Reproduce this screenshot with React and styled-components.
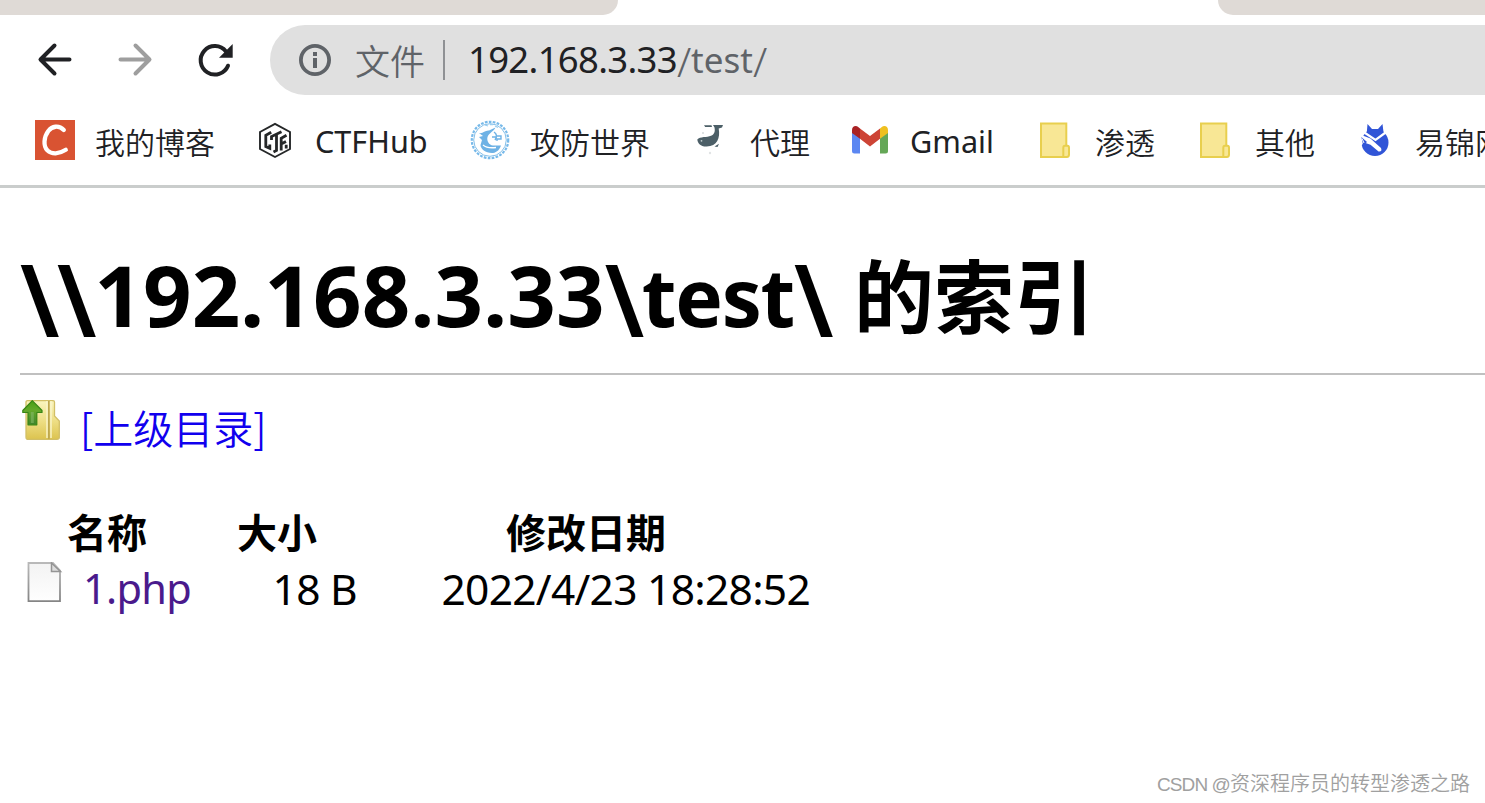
import React from 'react';
import styled, { createGlobalStyle } from 'styled-components';

const GlobalStyle = createGlobalStyle`
  * {
    box-sizing: border-box;
  }

  body {
    margin: 0;
    background: #fff;
    color: #000;
    font-family: 'Noto Sans', 'Noto Sans CJK SC', sans-serif;
    overflow: hidden;
  }
`;

const Window = styled.div`
  position: relative;
  display: flex;
  flex-direction: column;
  width: 1485px;
  height: 803px;
  overflow: hidden;
  white-space: nowrap;
`;

const TabStrip = styled.div`
  display: flex;
  justify-content: space-between;
  height: 15px;
`;

const TabEdge = styled.div`
  width: ${props => props.$width}px;
  background: #dfdad6;
  border-radius: ${props => props.$right ? '0 0 0 16px' : '0 0 16px 0'};
`;

const Toolbar = styled.div`
  display: flex;
  align-items: center;
  height: 90px;
  padding-left: 35px;
`;

const NavButton = styled.span`
  display: flex;
  width: 40px;
  height: 40px;
  margin-right: 40px;
  color: ${props => props.$muted ? '#9e9e9e' : '#202124'};

  &:nth-child(3) {
    margin-right: 35px;
  }
`;

const Omnibox = styled.div`
  display: flex;
  align-items: center;
  flex: 1;
  height: 70px;
  padding-left: 28px;
  border-radius: 35px 0 0 35px;
  background: #e0e0e0;
  color: #5f6368;
  font-size: 35px;
  line-height: 70px;
`;

const Scheme = styled.span`
  margin-left: 23px;
  font-family: 'Noto Sans CJK SC', sans-serif;
  font-weight: 350;
`;

const Divider = styled.span`
  width: 2px;
  height: 40px;
  margin: 0 23px 0 18px;
  background: #8f9194;
`;

const Address = styled.span`
  padding-bottom: 2px;
  font-size: 35px;
`;

const Host = styled.span`
  color: #202124;
  font-size: 36.5px;
  letter-spacing: -0.7px;
`;

const Slash = styled.span`
  font-size: 41px;
  font-weight: 300;
  line-height: 0;
  vertical-align: -4px;
`;

const Bookmarks = styled.div`
  display: flex;
  align-items: center;
  height: 83px;
  padding: 0 0 10px 35px;
  gap: 40px;
  border-bottom: 3px solid #cacdcc;
`;

const Bookmark = styled.div`
  display: flex;
  flex: none;
  align-items: center;
  gap: 20px;
  height: 40px;
`;

const BookmarkLabel = styled.span`
  width: ${props => props.$width ? `${props.$width}px` : 'auto'};
  padding-top: ${props => props.$latin ? 2 : 1}px;
  color: #202124;
  font-family: ${props => props.$latin ? "'Noto Sans'" : "'Noto Sans CJK SC'"}, sans-serif;
  font-size: ${props => props.$latin ? 30.6 : 30}px;
  font-weight: ${props => props.$latin ? 400 : 350};
  line-height: 40px;
`;

const Page = styled.main`
  display: flex;
  flex-direction: column;
  padding-left: 20px;
`;

const Title = styled.h1`
  display: flex;
  align-items: baseline;
  height: 187px;
  margin: 0;
  padding-top: 49px;
  border-bottom: 2px solid #c0c0c0;
  font-size: 85px;
  line-height: 110px;
  font-weight: 700;
`;

const TitleHost = styled.span`
  letter-spacing: 0.1px;
`;

const TitleFolder = styled.span`
  font-size: 80px;
  letter-spacing: -1.3px;
`;

const Backslash = styled.span`
  font-size: 99px;
  font-weight: 600;
  line-height: 0;
  letter-spacing: -2.4px;
  vertical-align: -10px;
`;

const TitleSuffix = styled.span`
  margin-left: 23px;
  font-family: 'Noto Sans CJK SC', sans-serif;
  font-size: 80px;
`;

const ParentRow = styled.div`
  display: flex;
  align-items: flex-start;
  height: 129px;
  padding-top: 25px;
`;

const ParentLink = styled.a`
  margin-left: 20px;
  color: #1100ee;
  font-family: 'Noto Sans CJK SC', sans-serif;
  font-size: 40px;
  font-weight: 350;
  line-height: 54px;
`;

const Listing = styled.div`
  display: grid;
  grid-template-columns: 174px 160px 450px;
  grid-auto-rows: 56px;
  column-gap: 3px;
`;

const HeadCell = styled.div`
  font-family: 'Noto Sans CJK SC', sans-serif;
  font-size: 40px;
  line-height: 55px;
  font-weight: 700;
  text-align: center;

  &:nth-child(3) {
    padding-left: 2px;
  }
`;

const Cell = styled.div`
  display: flex;
  justify-content: ${props => props.$end ? 'flex-end' : 'flex-start'};
  padding-top: 2px;
  font-size: 42.5px;
  line-height: 53px;
  letter-spacing: -0.72px;
`;

const FileLink = styled.a`
  margin-left: 18px;
  color: #4a1a8c;
  font-size: 41.5px;
`;

const Watermark = styled.div`
  position: absolute;
  right: 15px;
  bottom: 3px;
  color: #a0a0a0;
  font-family: 'Noto Sans CJK SC', sans-serif;
  font-size: 20px;
  font-weight: 350;
  line-height: 30px;
`;

const WatermarkLatin = styled.span`
  font-family: 'Liberation Sans', sans-serif;
  font-size: 19px;
  letter-spacing: -0.9px;
`;

const Glyph = styled.svg`
  display: block;
  flex: none;
  width: 40px;
  height: 40px;
`;

const BackIcon = () => (
  <Glyph viewBox="0 0 40 40" fill="none" stroke="currentColor" strokeWidth="4" strokeLinecap="round" strokeLinejoin="round">
    <path d="M34.5 19.5H6M19.5 5.5L5.5 19.5L19.5 33.5" />
  </Glyph>
);

const ForwardIcon = () => (
  <Glyph viewBox="0 0 40 40" fill="none" stroke="currentColor" strokeWidth="4" strokeLinecap="round" strokeLinejoin="round">
    <path d="M5.5 19.5H34M20.5 5.5L34.5 19.5L20.5 33.5" />
  </Glyph>
);

const ReloadIcon = () => (
  <Glyph viewBox="0 0 40 40">
    <path d="M31 11.5A14.2 14.2 0 1 0 33 25.7" fill="none" stroke="currentColor" strokeWidth="4" strokeLinecap="round" />
    <path d="M37.7 4V17.8H24Z" fill="currentColor" />
  </Glyph>
);

const InfoIcon = () => (
  <Glyph viewBox="0 0 40 40" style={{ width: 34 }} preserveAspectRatio="xMidYMid slice">
    <circle cx="20" cy="20" r="14.1" fill="none" stroke="#5f6368" strokeWidth="3.8" />
    <path d="M18 12h4v4h-4zM18 18h4v10h-4z" fill="#5f6368" />
  </Glyph>
);

const BlogIcon = () => (
  <Glyph viewBox="0 0 40 40">
    <path fill="#d95332" d="M0 0h40v40H0z" />
    <path d="M28.8 10C23.5 4.5 17 6.5 13.3 11C8.8 17 8 26 12.5 30.5C16.8 34.5 24 34.2 30.8 29.8" fill="none" stroke="#fff" strokeWidth="4.3" strokeLinecap="round" />
  </Glyph>
);

const CtfIcon = () => (
  <Glyph viewBox="0 0 40 40" fill="none" stroke="#252728">
    <path strokeWidth="1.9" d="M20 3.8L35 12V29L20 37L5 29V12Z" />
    <path strokeWidth="2.8" d="M16.2 12.2L10.8 15.4V26.5L14.8 28.4V24.5" />
    <path strokeWidth="2.8" d="M16.5 20V16.6L26.5 11.8M21.5 15V30.5L18.5 32" />
    <path strokeWidth="2.8" d="M31.5 15.2L26.2 18.2V30.5M26.2 24L31 21.5M31.2 24.8V28.5" />
  </Glyph>
);

const WorldIcon = () => (
  <Glyph viewBox="0 0 40 40">
    <circle cx="20" cy="20" r="18.2" fill="none" stroke="#77b9e9" strokeWidth="2.2" strokeDasharray="2.7 1.3" />
    <circle cx="20" cy="20" r="16.3" fill="none" stroke="#83bfe9" strokeWidth="1" />
    <path d="M9 13C13 14 15 10 19 10.5L25.5 7.5C24 11 19 13 17.5 17C16.5 21 19 25 23 25.5L31 25.5C30 29 27 32.5 23 33C16 33.5 10.5 29 10.5 25L12 20L9 17L13 16Z" fill="#6eb2e5" />
    <path d="M24 12C27 14 27 17 25 20M22 17H26M27 16H31V19H27V21" fill="none" stroke="#6eb2e5" strokeWidth="1.4" />
    <path d="M15 5L18 6M20 4.5H23M25 6L28 7.5" stroke="#9acdf0" strokeWidth="1.3" />
    <path d="M13 25C17 28.5 22 28 26 27.5" stroke="#fff" strokeWidth="1.3" fill="none" />
  </Glyph>
);

const WhaleIcon = () => (
  <Glyph viewBox="0 0 40 40" fill="#4c5f67">
    <path d="M14 5.2H21.5L22 7H15.2ZM23 5H33L32 7.5L28.7 8.6C30.5 18 27 27 16 26.6C10.5 26.4 7.8 23.5 7.3 19.5C10 16.5 17 17.5 21 15.8C24.5 14.5 25.3 11.5 24.5 7.6Z" />
    <path d="M29 23.8L24.5 26.5L27.5 27Z" />
    <circle cx="13" cy="13" r="1" fill="#d5d9db" />
    <circle cx="20" cy="33" r="1.2" fill="#e1e4e5" />
    <circle cx="11.5" cy="20.8" r=".9" fill="#c3ced1" />
  </Glyph>
);

const GmailIcon = () => (
  <Glyph viewBox="0 0 40 40">
    <path fill="#5c87f2" d="M2 12L10 17V33.5H4.5Q2 33.5 2 31Z" />
    <path fill="#65a757" d="M30 17L38 12V31Q38 33.5 35.5 33.5H30Z" />
    <path fill="#cd4435" d="M10 8.5L20 16L30 8.5V18.8L20 26.5L10 18.8Z" />
    <path fill="#a92224" d="M2 13V10C2 6.2 5.8 5 8.5 7.2L10 8.5V18.8Z" />
    <path fill="#efc020" d="M38 13V10C38 6.2 34.2 5 31.5 7.2L30 8.5V18.8Z" />
  </Glyph>
);

const FolderIcon = () => (
  <Glyph viewBox="0 0 40 40" fill="#f8e795" stroke="#e8cf4e" strokeWidth="2">
    <path d="M6 3.5H31.3V37H6Z" />
    <path d="M28.3 37V28Q28.3 25.8 30 25.8H32.5Q34 25.8 34 28V34.5Q34 37 31.5 37Z" />
  </Glyph>
);

const FoxIcon = () => (
  <Glyph viewBox="0 0 40 40">
    <circle cx="20" cy="22.5" r="13.5" fill="#3155d7" />
    <path d="M11.5 16L12.5 4L17 9H23L27.5 4L29 16L25 20H16Z" fill="#3155d7" />
    <path d="M8.5 12L20.5 19.8L32 11.5" fill="none" stroke="#fff" strokeWidth="2.2" />
    <path d="M5 14.5L15.5 18.5L21.5 24L26 28Q27.5 32 23.5 31.5L15.5 24.8L9 22.5L5.5 26.5Z" fill="#fff" />
    <path d="M6.3 17L12 22L8.2 25.5Z" fill="#3155d7" />
    <path d="M7 18.5L9 23" stroke="#fff" strokeWidth="1" />
  </Glyph>
);

const ParentIcon = () => (
  <Glyph viewBox="0 0 40 40">
    <defs>
      <linearGradient id="folder" x1="0" y1="0" x2="0" y2="1">
        <stop offset="0" stopColor="#faf5bf" />
        <stop offset=".55" stopColor="#eddd82" />
        <stop offset="1" stopColor="#dcc34f" />
      </linearGradient>
      <linearGradient id="arrow" x1="0" y1="0" x2="0" y2="1">
        <stop offset="0" stopColor="#489f13" />
        <stop offset=".4" stopColor="#65a92a" />
        <stop offset="1" stopColor="#3e832c" />
      </linearGradient>
    </defs>
    <path d="M6 2Q6 .7 7.5 .7H33Q34.5 .7 34.5 2V16L39.3 21V37.5Q39.3 39.3 37 39.3H7.5Q6 39.3 6 37Z" fill="url(#folder)" stroke="#d2bf66" strokeWidth="1.3" />
    <path d="M28.8 1V39" stroke="#bda74d" strokeWidth="1.8" />
    <path d="M27 1V38M31 1V38" stroke="#faf6cc" strokeWidth="1.4" />
    <path d="M12.3 .7L22 10.5V12.5H16.8V24.8H8V12.5H2.8V10.5Z" fill="url(#arrow)" stroke="#378514" strokeWidth="1.2" strokeLinejoin="round" />
    <path d="M12.3 12V23" stroke="#85ba68" strokeWidth="3" opacity=".6" />
  </Glyph>
);

const FileIcon = () => (
  <Glyph viewBox="0 0 40 40" style={{ marginLeft: 5 }}>
    <defs>
      <linearGradient id="paper" x1="0" y1="0" x2="0" y2="1">
        <stop offset="0" stopColor="#f3f3f3" />
        <stop offset="1" stopColor="#fefefe" />
      </linearGradient>
      <linearGradient id="edge" x1="0" y1="0" x2="0" y2="1">
        <stop offset="0" stopColor="#b9b9b9" />
        <stop offset="1" stopColor="#858585" />
      </linearGradient>
    </defs>
    <path d="M3.5 1H28L35 8.5V39.2H3.5Z" fill="url(#paper)" stroke="url(#edge)" strokeWidth="1.8" />
    <path d="M26.5 1V9.5H35.5Z" fill="#ddd" stroke="#949494" strokeWidth="1.5" />
  </Glyph>
);

const bookmarks = [
  { label: '我的博客', icon: BlogIcon },
  { label: 'CTFHub', icon: CtfIcon, latin: true, width: 115 },
  { label: '攻防世界', icon: WorldIcon },
  { label: '代理', icon: WhaleIcon },
  { label: 'Gmail', icon: GmailIcon, latin: true, width: 85 },
  { label: '渗透', icon: FolderIcon },
  { label: '其他', icon: FolderIcon },
  { label: '易锦网', icon: FoxIcon },
];

const App = () => (
  <Window>
    <GlobalStyle />
    <TabStrip>
      <TabEdge $width={618} />
      <TabEdge $width={267} $right />
    </TabStrip>
    <Toolbar>
      <NavButton><BackIcon /></NavButton>
      <NavButton $muted><ForwardIcon /></NavButton>
      <NavButton><ReloadIcon /></NavButton>
      <Omnibox>
        <InfoIcon />
        <Scheme>文件</Scheme>
        <Divider />
        <Address>
          <Host>192.168.3.33</Host>
          <Slash>/</Slash>test<Slash>/</Slash>
        </Address>
      </Omnibox>
    </Toolbar>
    <Bookmarks>
      {bookmarks.map(({ label, icon: Icon, latin, width }) => (
        <Bookmark key={label}>
          <Icon />
          <BookmarkLabel $latin={latin} $width={width}>{label}</BookmarkLabel>
        </Bookmark>
      ))}
    </Bookmarks>
    <Page>
      <Title>
        <span>
          <Backslash>\\</Backslash>
          <TitleHost>192.168.3.33</TitleHost>
          <Backslash>\</Backslash>
          <TitleFolder>test</TitleFolder>
          <Backslash>\</Backslash>
        </span>
        <TitleSuffix>的索引</TitleSuffix>
      </Title>
      <ParentRow>
        <ParentIcon />
        <ParentLink>[上级目录]</ParentLink>
      </ParentRow>
      <Listing>
        <HeadCell>名称</HeadCell>
        <HeadCell>大小</HeadCell>
        <HeadCell>修改日期</HeadCell>
        <Cell>
          <FileIcon />
          <FileLink>1.php</FileLink>
        </Cell>
        <Cell $end>18 B</Cell>
        <Cell $end>2022/4/23 18:28:52</Cell>
      </Listing>
    </Page>
    <Watermark>
      <WatermarkLatin>CSDN @</WatermarkLatin>资深程序员的转型渗透之路
    </Watermark>
  </Window>
);

export default App;
